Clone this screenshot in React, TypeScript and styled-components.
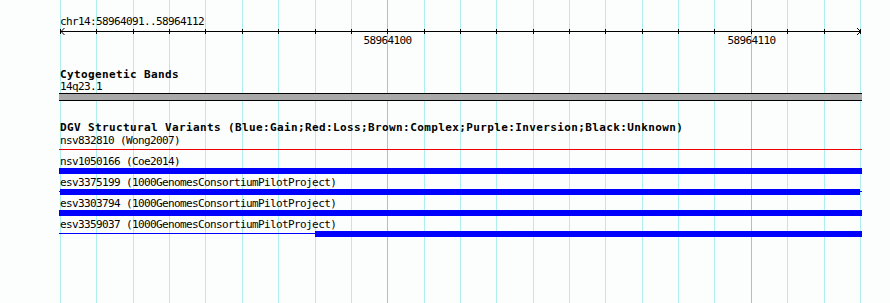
import React from 'react';
import styled, { createGlobalStyle } from 'styled-components';

const VIEW_START = 58964091;
const VIEW_END = 58964112;
const PX_PER_BASE = 36.36;
const ORIGIN = 60;

const baseX = (base: number) => Math.round(ORIGIN + (base - VIEW_START) * PX_PER_BASE);

const GlobalStyle = createGlobalStyle`
  html, body {
    margin: 0;
    padding: 0;
    background: #fcfefd;
  }
`;

const Canvas = styled.div`
  position: relative;
  width: 890px;
  height: 303px;
  overflow: hidden;
  background: #fcfefd;
  color: #000;
  font-family: 'DejaVu Sans Mono', 'Liberation Mono', monospace;
`;

const GridLayer = styled.svg`
  position: absolute;
  top: 0;
  left: 0;
  z-index: 0;
`;

const Content = styled.div`
  position: relative;
  z-index: 1;
`;

const Ruler = styled.svg`
  display: block;
  font-family: 'DejaVu Sans Mono', 'Liberation Mono', monospace;
  font-size: 11px;
  letter-spacing: -0.62px;
`;

const Track = styled.section<{ $gap: number }>`
  margin-top: ${(p) => p.$gap}px;
`;

const TrackTitle = styled.h2<{ $lh: number }>`
  margin: 0;
  padding-left: 60px;
  font-size: 11px;
  font-weight: bold;
  line-height: ${(p) => p.$lh}px;
  letter-spacing: 0.38px;
  white-space: nowrap;
`;

const FeatureLabel = styled.div<{ $lh: number; $pad?: number }>`
  padding: ${(p) => p.$pad ?? 0}px 0 0 60px;
  font-size: 11px;
  line-height: ${(p) => p.$lh}px;
  letter-spacing: -0.62px;
  white-space: nowrap;
`;

const Band = styled.div`
  margin-left: 59px;
  width: 803px;
  height: 6px;
  background: #a9a9a9;
  border-top: 1px solid #000;
  border-bottom: 1px solid #000;
`;

const Lane = styled.div`
  display: flex;
  align-items: flex-start;
  height: 6px;
  margin-bottom: 1px;
`;

const Segment = styled.div<{ $thick: boolean; $color: string }>`
  flex: none;
  height: ${(p) => (p.$thick ? 6 : 1)}px;
  margin-top: ${(p) => (p.$thick ? 0 : 2)}px;
  background: ${(p) => p.$color};
`;

type Seg = { from: number; to: number; thick: boolean };

type Feature = {
  name: string;
  source: string;
  color: string;
  segments: Seg[];
};

const features: Feature[] = [
  { name: 'nsv832810', source: 'Wong2007', color: '#f00000', segments: [{ from: 59, to: 862, thick: false }] },
  { name: 'nsv1050166', source: 'Coe2014', color: '#0000ff', segments: [{ from: 59, to: 862, thick: true }] },
  {
    name: 'esv3375199',
    source: '1000GenomesConsortiumPilotProject',
    color: '#0000ff',
    segments: [
      { from: 59, to: 60, thick: false },
      { from: 60, to: 860, thick: true },
      { from: 860, to: 862, thick: false }
    ]
  },
  {
    name: 'esv3303794',
    source: '1000GenomesConsortiumPilotProject',
    color: '#0000ff',
    segments: [{ from: 59, to: 862, thick: true }]
  },
  {
    name: 'esv3359037',
    source: '1000GenomesConsortiumPilotProject',
    color: '#0000ff',
    segments: [
      { from: 59, to: baseX(58964098), thick: false },
      { from: baseX(58964098), to: 862, thick: true }
    ]
  }
];

const bases: number[] = [];
for (let b = VIEW_START; b <= VIEW_END + 1; b++) bases.push(b);

function Grid() {
  return (
    <GridLayer width={890} height={303} shapeRendering="crispEdges">
      {bases.map((b) => (
        <rect
          key={b}
          x={baseX(b)}
          y={0}
          width={1}
          height={303}
          fill={b % 10 === 0 ? '#8ccbe2' : '#aeeeee'}
        />
      ))}
    </GridLayer>
  );
}

function Scale() {
  const end = baseX(VIEW_END + 1);
  return (
    <Ruler width={890} height={52}>
      <text x={60} y={25}>
        chr14:{VIEW_START}..{VIEW_END}
      </text>
      <g stroke="#000" shapeRendering="crispEdges">
        <line x1={60} y1={31.5} x2={end + 1} y2={31.5} />
        {bases.map((b) => (
          <line key={b} x1={baseX(b) + 0.5} y1={29} x2={baseX(b) + 0.5} y2={34} />
        ))}
      </g>
      <g stroke="#000" fill="none">
        <polyline points="64.5,28 61,31.5 64.5,35" />
        <polyline points={`${end - 3},28 ${end + 0.5},31.5 ${end - 3},35`} />
      </g>
      {bases
        .filter((b) => b % 10 === 0)
        .map((b) => (
          <text key={b} x={baseX(b) + 0.5} y={44} textAnchor="middle">
            {b}
          </text>
        ))}
    </Ruler>
  );
}

function FeatureRow({ feature }: { feature: Feature }) {
  return (
    <div>
      <FeatureLabel $lh={12} $pad={2}>
        {feature.name} ({feature.source})
      </FeatureLabel>
      <Lane style={{ marginLeft: feature.segments[0].from }}>
        {feature.segments.map((s, i) => (
          <Segment key={i} $thick={s.thick} $color={feature.color} style={{ width: s.to - s.from }} />
        ))}
      </Lane>
    </div>
  );
}

export default function App() {
  return (
    <Canvas>
      <GlobalStyle />
      <Grid />
      <Content>
        <Scale />
        <Track $gap={17}>
          <TrackTitle $lh={12}>Cytogenetic Bands</TrackTitle>
          <FeatureLabel $lh={12}>14q23.1</FeatureLabel>
          <Band />
        </Track>
        <Track $gap={22}>
          <TrackTitle $lh={10}>
            DGV Structural Variants (Blue:Gain;Red:Loss;Brown:Complex;Purple:Inversion;Black:Unknown)
          </TrackTitle>
          {features.map((f) => (
            <FeatureRow key={f.name} feature={f} />
          ))}
        </Track>
      </Content>
    </Canvas>
  );
}
